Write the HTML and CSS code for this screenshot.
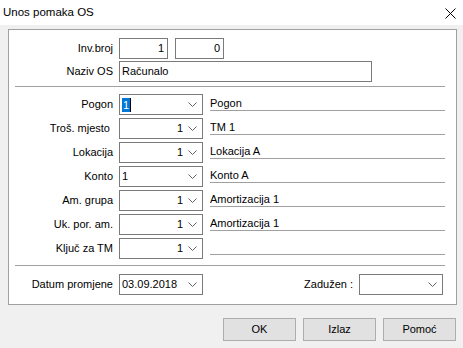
FILE: index.html
```html
<!DOCTYPE html>
<html>
<head>
<meta charset="utf-8">
<link rel="stylesheet" href="styles.css">
</head>
<body>
<div class="titlebar">
  <span class="title">Unos pomaka OS</span>
  <svg class="close" width="11" height="11" viewBox="0 0 11 11"><path d="M0.5 0.5 L10.5 10.5 M10.5 0.5 L0.5 10.5" stroke="#000" stroke-width="1" fill="none"/></svg>
</div>
<div class="content">
  <div class="panel">
    <div class="top">
      <div class="row">
        <span class="lbl">Inv.broj</span>
        <div class="box num">1</div>
        <div class="box num">0</div>
      </div>
      <div class="row">
        <span class="lbl">Naziv OS</span>
        <div class="box wide">Računalo</div>
      </div>
    </div>
    <div class="sep sep1"></div>
    <div class="rows">
      <div class="row">
        <span class="lbl">Pogon</span>
        <div class="combo"><span class="val left"><span class="sel">1</span><span class="caret"></span></span><svg class="chev" width="9" height="5" viewBox="0 0 9 5"><polyline points="0.5,0.5 4.5,4.5 8.5,0.5" fill="none" stroke="#606060"/></svg></div>
        <div class="desc">Pogon</div>
      </div>
      <div class="row">
        <span class="lbl">Troš. mjesto&nbsp;</span>
        <div class="combo"><span class="val right">1</span><svg class="chev" width="9" height="5" viewBox="0 0 9 5"><polyline points="0.5,0.5 4.5,4.5 8.5,0.5" fill="none" stroke="#606060"/></svg></div>
        <div class="desc">TM 1</div>
      </div>
      <div class="row">
        <span class="lbl">Lokacija</span>
        <div class="combo"><span class="val right">1</span><svg class="chev" width="9" height="5" viewBox="0 0 9 5"><polyline points="0.5,0.5 4.5,4.5 8.5,0.5" fill="none" stroke="#606060"/></svg></div>
        <div class="desc">Lokacija A</div>
      </div>
      <div class="row">
        <span class="lbl">Konto</span>
        <div class="combo"><span class="val left">1</span><svg class="chev" width="9" height="5" viewBox="0 0 9 5"><polyline points="0.5,0.5 4.5,4.5 8.5,0.5" fill="none" stroke="#606060"/></svg></div>
        <div class="desc">Konto A</div>
      </div>
      <div class="row">
        <span class="lbl">Am. grupa</span>
        <div class="combo"><span class="val right">1</span><svg class="chev" width="9" height="5" viewBox="0 0 9 5"><polyline points="0.5,0.5 4.5,4.5 8.5,0.5" fill="none" stroke="#606060"/></svg></div>
        <div class="desc">Amortizacija 1</div>
      </div>
      <div class="row">
        <span class="lbl">Uk. por. am.</span>
        <div class="combo"><span class="val right">1</span><svg class="chev" width="9" height="5" viewBox="0 0 9 5"><polyline points="0.5,0.5 4.5,4.5 8.5,0.5" fill="none" stroke="#606060"/></svg></div>
        <div class="desc">Amortizacija 1</div>
      </div>
      <div class="row">
        <span class="lbl">Ključ za TM</span>
        <div class="combo"><span class="val right">1</span><svg class="chev" width="9" height="5" viewBox="0 0 9 5"><polyline points="0.5,0.5 4.5,4.5 8.5,0.5" fill="none" stroke="#606060"/></svg></div>
        <div class="desc"></div>
      </div>
    </div>
    <div class="sep sep2"></div>
    <div class="row datum">
      <span class="lbl">Datum promjene</span>
      <div class="combo"><span class="val left">03.09.2018</span><svg class="chev" width="9" height="5" viewBox="0 0 9 5"><polyline points="0.5,0.5 4.5,4.5 8.5,0.5" fill="none" stroke="#606060"/></svg></div>
      <span class="lbl2">Zadužen :</span>
      <div class="combo"><span class="val left"></span><svg class="chev" width="9" height="5" viewBox="0 0 9 5"><polyline points="0.5,0.5 4.5,4.5 8.5,0.5" fill="none" stroke="#606060"/></svg></div>
    </div>
  </div>
  <div class="buttons">
    <div class="btn">OK</div>
    <div class="btn">Izlaz</div>
    <div class="btn">Pomoć</div>
  </div>
</div>
</body>
</html>
```
FILE: styles.css
```css
* { box-sizing: border-box; }
html, body {
  margin: 0;
  padding: 0;
  width: 463px;
  height: 348px;
  overflow: hidden;
  background: #f0f0f0;
  font-family: "Liberation Sans", Arial, sans-serif;
  font-size: 11px;
  color: #000;
}
.titlebar {
  height: 25px;
  background: #fff;
  display: flex;
  align-items: center;
  justify-content: space-between;
  padding: 0 7px 1px 3px;
}
.title {
  font-size: 11.5px;
}
.close {
  display: block;
  margin-top: 2px;
}
.content {
  padding: 4px 6px 0 8px;
}
.panel {
  width: 449px;
  height: 276px;
  background: #fff;
  border: 1px solid #a0a0a0;
  padding: 8px 0 0 0;
}
.row {
  display: flex;
  align-items: flex-start;
  height: 21px;
}
.lbl {
  width: 104px;
  margin-right: 6px;
  text-align: right;
  line-height: 21px;
  white-space: pre;
}
.top .row + .row { margin-top: 2px; }
.box {
  height: 21px;
  border: 1px solid #7a7a7a;
  line-height: 19px;
  padding: 0 3px 0 2px;
  background: #fff;
}
.box.num {
  width: 49px;
  text-align: right;
  margin-right: 7px;
}
.box.wide {
  width: 253px;
}
.sep {
  height: 1px;
  background: #a0a0a0;
  margin: 0 11px 0 6px;
}
.sep1 { margin-top: 4px; }
.rows {
  margin-top: 7px;
  display: flex;
  flex-direction: column;
  gap: 3px;
}
.combo {
  width: 84px;
  height: 21px;
  border: 1px solid #7a7a7a;
  display: flex;
  align-items: center;
  padding: 0 5px 0 2px;
  background: #fff;
}
.val {
  flex: 1;
  line-height: 19px;
  display: flex;
  align-items: center;
}
.val.right {
  justify-content: flex-end;
  padding-right: 5px;
}
.chev {
  display: block;
  flex: none;
}
.sel {
  background: #0078d7;
  color: #fff;
  line-height: 14px;
  padding: 0 1px;
}
.caret {
  width: 1px;
  height: 14px;
  background: #000;
}
.desc {
  width: 235px;
  margin-left: 7px;
  margin-top: 2px;
  height: 15px;
  line-height: 14px;
  border-bottom: 1px solid #a0a0a0;
}
.sep2 { margin-top: 6px; }
.datum {
  margin-top: 8px;
}
.lbl2 {
  width: 150px;
  text-align: right;
  line-height: 21px;
  margin-right: 6px;
}
.buttons {
  display: flex;
  justify-content: flex-end;
  gap: 7px;
  margin-top: 13px;
  margin-right: 1px;
}
.btn {
  width: 73px;
  height: 23px;
  border: 1px solid #adadad;
  background: #e1e1e1;
  text-align: center;
  line-height: 21px;
}
```
